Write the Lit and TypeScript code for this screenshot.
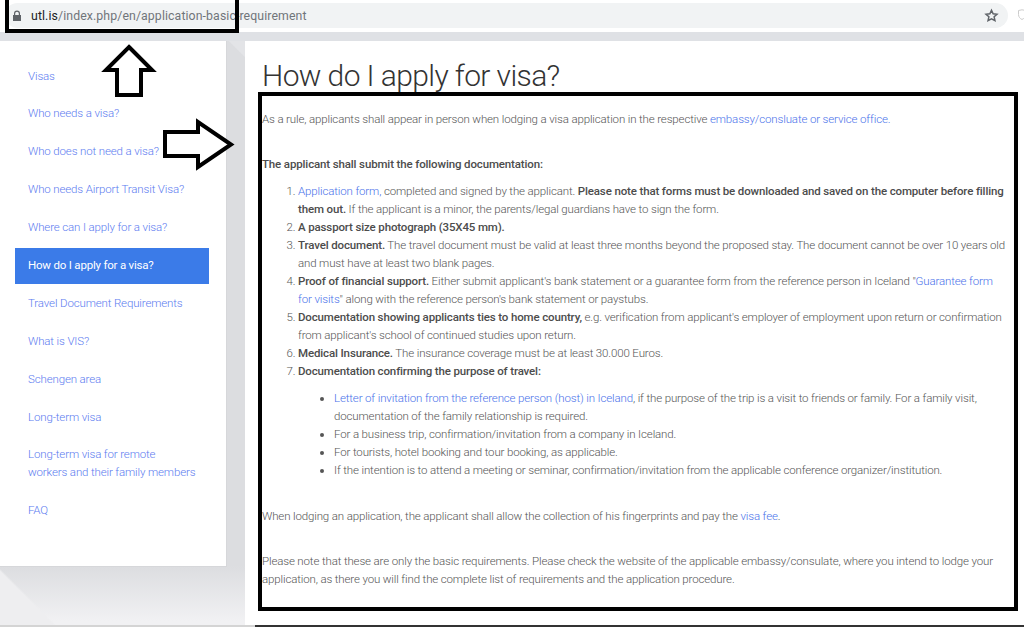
import { LitElement, html, css } from "lit";
import { customElement } from "lit/decorators.js";

const nav: string[] = [
  "Visas",
  "Who needs a visa?",
  "Who does not need a visa?",
  "Who needs Airport Transit Visa?",
  "Where can I apply for a visa?",
  "How do I apply for a visa?",
  "Travel Document Requirements",
  "What is VIS?",
  "Schengen area",
  "Long-term visa",
  "Long-term visa for remote workers and their family members",
  "FAQ",
];

@customElement("app-root")
export class AppRoot extends LitElement {
  static styles = css`
    :host {
      display: block;
      position: relative;
      width: 1024px;
      height: 627px;
      overflow: hidden;
      background: #fff;
      font-family: Roboto, "Liberation Sans", sans-serif;
      font-size: 11.5px;
      letter-spacing: -0.14px;
      line-height: 18px;
      color: #555;
    }
    .chrome { height: 32px; padding: 3px 16px 0 5px; box-sizing: border-box; background: #fff; position: relative; }
    .address {
      height: 25px; border-radius: 13px; background: #f1f3f4;
      display: flex; align-items: center; padding: 0 9px 0 7px; gap: 9px;
      font-size: 12.3px; color: #70757a; letter-spacing: 0.1px;
    }
    .address .host { color: #202124; }
    .address .url { flex: 1; }
    .shield { position: absolute; right: -2px; top: 9px; }
    .band { height: 9px; background: #dfe1e5; }
    .body {
      display: flex; height: 586px; box-sizing: border-box;
      border-bottom: 2px solid #d4d4d4;
      background: linear-gradient(#dcdde0 525px, #f1f1f3 580px);
    }
    .left { width: 245px; flex: none; position: relative;
      background:
        linear-gradient(225deg, #e3e4e7 11px, transparent 12px) right top / 18px 30px no-repeat,
        linear-gradient(45deg, #eeeef0 38px, transparent 40px) left bottom / 120px 120px no-repeat; }
    .side {
      width: 227px; height: 526px; box-sizing: border-box; background: #fff;
      border-right: 1px solid #d6d7da; border-bottom: 1px solid #d6d7da;
      padding: 16.6px 17px 0 15px;
      display: flex; flex-direction: column; gap: 1.9px;
      font-weight: 300;
    }
    .side a { display: block; padding: 9px 13px; color: #5c7cf0; }
    .side a.active {
      background: #3b7be8; color: #fff; font-weight: 400; letter-spacing: -0.2px;
      margin: 0.6px 0 -0.6px; padding: 8.4px 13px 9.6px;
    }
    .main { flex: 1; background: #fff; padding: 0 16px 0 17px; min-width: 0; font-weight: 300; }
    h1 { margin: 17px 0 16px; font-size: 30px; letter-spacing: -0.6px; line-height: 36px; font-weight: 300; color: #333; }
    p { margin: 0 0 27px; }
    a { color: #4a72ea; text-decoration: none; }
    b { font-weight: 500; color: #4c4c4c; }
    ol, ul { margin: 0; padding: 0 0 0 36px; }
    ol { margin-bottom: 28px; }
    ul { padding-left: 36px; margin: 9px 0 27px; list-style-type: disc; }
    .main > p.lead { margin-bottom: 9px; }
    .overlay { position: absolute; left: 0; top: 0; pointer-events: none; }
  `;

  render() {
    return html`
      <div class="chrome">
        <div class="address">
          <svg width="10" height="12" viewBox="0 0 10 12"><path fill="#5f6368" d="M1 5h1V3.500a3 3 0 0 1 6 0V5h1v6H1zM3.200 5h3.600V3.500a1.800 1.800 0 0 0-3.600 0z"/></svg>
          <span class="url"><span class="host">utl.is</span>/index.php/en/application-basic-requirement</span>
          <svg width="15" height="15" viewBox="0 0 24 24"><path fill="none" stroke="#5f6368" stroke-width="2.4" d="M12 3.500l2.600 5.700 6.200.7-4.600 4.200 1.300 6.100L12 17.200l-5.500 3 1.300-6.100L3.200 9.900l6.200-.7z"/></svg>
        </div>
        <svg class="shield" width="8" height="12" viewBox="0 0 8 12"><path fill="none" stroke="#ccc" d="M.5 1.500L4 .8l3.500.7v4c0 2.500-1.500 4-3.500 5-2-1-3.500-2.500-3.500-5z"/></svg>
      </div>
      <div class="band"></div>
      <div class="body">
        <div class="left">
          <nav class="side">
            ${nav.map((n, i) => html`<a class=${i === 5 ? "active" : ""}>${n}</a>`)}
          </nav>
        </div>
        <main class="main">
          <h1>How do I apply for visa?</h1>
          <p>As a rule, applicants shall appear in person when lodging a visa application in the respective <a>embassy/consluate or service office.</a></p>
          <p class="lead"><b>The applicant shall submit the following documentation:</b></p>
          <ol>
            <li><a>Application form,</a> completed and signed by the applicant. <b>Please note that forms must be downloaded and saved on the computer before filling them out.</b> If the applicant is a minor, the parents/legal guardians have to sign the form.</li>
            <li><b>A passport size photograph (35X45 mm).</b></li>
            <li><b>Travel document.</b> The travel document must be valid at least three months beyond the proposed stay. The document cannot be over 10 years old and must have at least two blank pages.</li>
            <li><b>Proof of financial support.</b> Either submit applicant's bank statement or a guarantee form from the reference person in Iceland "<a>Guarantee form for visits</a>" along with the reference person's bank statement or paystubs.</li>
            <li><b>Documentation showing applicants ties to home country,</b> e.g. verification from applicant's employer of employment upon return or confirmation from applicant's school of continued studies upon return.</li>
            <li><b>Medical Insurance.</b> The insurance coverage must be at least 30.000 Euros.</li>
            <li><b>Documentation confirming the purpose of travel:</b>
              <ul>
                <li><a>Letter of invitation from the reference person (host) in Iceland</a>, if the purpose of the trip is a visit to friends or family. For a family visit, documentation of the family relationship is required.</li>
                <li>For a business trip, confirmation/invitation from a company in Iceland.</li>
                <li>For tourists, hotel booking and tour booking, as applicable.</li>
                <li>If the intention is to attend a meeting or seminar, confirmation/invitation from the applicable conference organizer/institution.</li>
              </ul>
            </li>
          </ol>
          <p>When lodging an application, the applicant shall allow the collection of his fingerprints and pay the <a>visa fee</a>.</p>
          <p>Please note that these are only the basic requirements. Please check the website of the applicable embassy/consulate, where you intend to lodge your application, as there you will find the complete list of requirements and the application procedure.</p>
        </main>
      </div>
      <svg class="overlay" width="1024" height="627" viewBox="0 0 1024 627">
        <g fill="none" stroke="#000" stroke-width="4">
          <rect x="7" y="-2" width="230" height="33" />
          <rect x="260" y="94" width="756" height="515" />
        </g>
        <g fill="#fff" stroke="#000" stroke-width="4" stroke-linejoin="miter">
          <path d="M129 47L152 70H141V95H117V70H106Z" />
          <path d="M165 132H198V122L231 144.500L198 167V156H165Z" />
        </g>
        <rect x="255" y="625" width="769" height="2" fill="#333" />
      </svg>
    `;
  }
}
